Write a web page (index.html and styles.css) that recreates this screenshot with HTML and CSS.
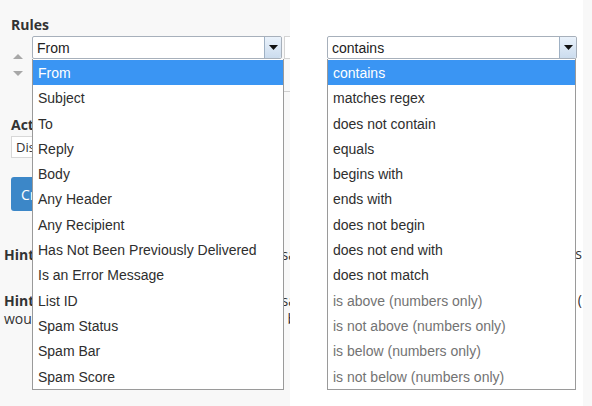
FILE: index.html
```html
<!DOCTYPE html>
<html>
<head>
<meta charset="utf-8">
<link rel="stylesheet" href="styles.css">
</head>
<body>
<div class="stage">
  <section class="panel left">
    <h3 class="heading rules">Rules</h3>
    <div class="rule-row">
      <div class="movers">
        <span class="arrow up"></span>
        <span class="arrow down"></span>
      </div>
      <div class="select-wrap w-left">
        <div class="select"><span class="val">From</span><span class="chev"><svg width="9" height="5" viewBox="0 0 9 5"><path d="M0 0H9L4.5 5Z" fill="#111"/></svg></span></div>
        <ul class="menu">
          <li class="sel">From</li>
          <li>Subject</li>
          <li>To</li>
          <li>Reply</li>
          <li>Body</li>
          <li>Any Header</li>
          <li>Any Recipient</li>
          <li>Has Not Been Previously Delivered</li>
          <li>Is an Error Message</li>
          <li>List ID</li>
          <li>Spam Status</li>
          <li>Spam Bar</li>
          <li>Spam Score</li>
        </ul>
      </div>
      <div class="next-col">
        <div class="next-select"></div>
        <div class="next-line"></div>
      </div>
    </div>
    <h3 class="heading actions">Actions</h3>
    <div class="action-box">Discard Message</div>
    <button class="create">Create</button>
    <p class="hint h1"><b>Hint:</b><span class="tail">sa</span></p>
    <p class="hint h2"><b>Hint:</b><span class="tail">sa</span></p>
    <p class="hint"><span>would</span><span class="tail">b</span></p>
  </section>
  <section class="panel right">
    <div class="select-wrap w-right">
      <div class="select"><span class="val">contains</span><span class="chev"><svg width="9" height="5" viewBox="0 0 9 5"><path d="M0 0H9L4.5 5Z" fill="#111"/></svg></span></div>
      <ul class="menu">
        <li class="sel">contains</li>
        <li>matches regex</li>
        <li>does not contain</li>
        <li>equals</li>
        <li>begins with</li>
        <li>ends with</li>
        <li>does not begin</li>
        <li>does not end with</li>
        <li>does not match</li>
        <li class="dis">is above (numbers only)</li>
        <li class="dis">is not above (numbers only)</li>
        <li class="dis">is below (numbers only)</li>
        <li class="dis">is not below (numbers only)</li>
      </ul>
    </div>
    <p class="rhint r1"><span>messages</span><span class="tail">s</span></p>
    <p class="rhint r2"><span>numbers</span><span class="tail">(</span></p>
  </section>
</div>
</body>
</html>
```

FILE: styles.css
```css
html, body {
  margin: 0;
  padding: 0;
  background: #f8f8f8;
}
body {
  width: 592px;
  height: 406px;
  overflow: hidden;
  font-family: "Open Sans", "Liberation Sans", sans-serif;
  color: #333;
}
.stage {
  display: flex;
  height: 406px;
}
.panel {
  position: relative;
  overflow: hidden;
  height: 406px;
  flex: none;
}
.left {
  width: 290px;
  background: #f8f8f8;
}
.right {
  width: 293px;
  background: #ffffff;
}
.heading {
  margin: 0;
  font-size: 14px;
  font-weight: 700;
  line-height: 20px;
  color: #333;
  padding-left: 11px;
}
.rules {
  padding-top: 15px;
}
.rule-row {
  display: flex;
  align-items: flex-start;
  margin-top: 1px;
  height: 77px;
}
.movers {
  box-sizing: content-box;
  width: 10px;
  padding-left: 13px;
  margin-right: 9px;
  display: flex;
  flex-direction: column;
  align-items: center;
  padding-top: 18px;
  gap: 12px;
  flex: none;
}
.arrow {
  display: block;
  width: 0;
  height: 0;
  border-left: 5px solid transparent;
  border-right: 5px solid transparent;
}
.arrow.up {
  border-bottom: 5px solid #a8a8a8;
}
.arrow.down {
  border-top: 5px solid #a8a8a8;
}
.select-wrap {
  position: relative;
  font-family: "Liberation Sans", Arial, sans-serif;
  flex: none;
}
.select {
  box-sizing: border-box;
  height: 23px;
  width: 250px;
  border: 1px solid #a7b0bb;
  border-radius: 2px;
  background: #fff;
  display: flex;
  align-items: center;
  justify-content: space-between;
  font-size: 14px;
  color: #222;
}
.val {
  padding-left: 4px;
}
.chev {
  box-sizing: border-box;
  width: 17px;
  height: 21px;
  border-left: 1px solid #9fb1c4;
  border-radius: 0 2px 2px 0;
  background: linear-gradient(#eaf2fb, #cbdcee);
  display: flex;
  align-items: center;
  justify-content: center;
}
.menu {
  position: absolute;
  left: 0;
  top: 23px;
  margin: 0;
  padding: 1px 0 0 0;
  list-style: none;
  box-sizing: border-box;
  background: #fff;
  border-left: 1px solid #9a9a9a;
  border-right: 1px solid #9a9a9a;
  border-bottom: 1px solid #9a9a9a;
  z-index: 5;
}
.w-left .menu {
  width: 252px;
}
.w-right .menu {
  width: 249px;
}
.menu li {
  height: 25.3px;
  line-height: 26px;
  padding-left: 5px;
  font-size: 14px;
  color: #2e2e2e;
  white-space: nowrap;
}
.menu li.sel {
  background: #3a95f3;
  color: #fff;
}
.menu li.dis {
  color: #737373;
}
.next-col {
  margin-left: 2px;
  width: 10px;
  flex: none;
}
.next-select {
  height: 21px;
  border: 1px solid #d4d4d4;
  border-right: none;
  background: #fff;
}
.next-line {
  margin-top: 32px;
  border-top: 1px solid #cfcfcf;
}
.actions {
  margin-top: 2px;
}
.action-box {
  box-sizing: border-box;
  margin-left: 11px;
  margin-top: 1px;
  width: 120px;
  height: 22px;
  border: 1px solid #d8d8d8;
  background: #fff;
  font-size: 13px;
  line-height: 20px;
  padding-left: 4px;
  color: #333;
  white-space: nowrap;
}
.create {
  display: block;
  margin: 19px 0 0 11px;
  width: 80px;
  height: 34px;
  border: none;
  border-radius: 3px;
  background: #3c87c8;
  color: #fff;
  font-family: "Open Sans", sans-serif;
  font-size: 14px;
  text-align: left;
  padding-left: 10px;
}
.hint {
  box-sizing: border-box;
  width: 296px;
  display: flex;
  justify-content: space-between;
  margin: 0;
  padding-left: 4px;
  font-size: 14px;
  line-height: 18px;
  color: #333;
  white-space: nowrap;
}
.hint b {
  font-weight: 700;
}
.h1 {
  margin-top: 35px;
}
.h2 {
  margin-top: 28px;
}
.w-right {
  margin-left: 37px;
  margin-top: 36px;
  width: 250px;
}
.rhint {
  box-sizing: border-box;
  width: 293px;
  display: flex;
  justify-content: space-between;
  margin: 0;
  padding-left: 40px;
  padding-right: 1px;
  font-size: 14px;
  line-height: 18px;
  color: #333;
  white-space: nowrap;
}
.r1 {
  margin-top: 186px;
}
.r2 {
  margin-top: 28px;
}
```
